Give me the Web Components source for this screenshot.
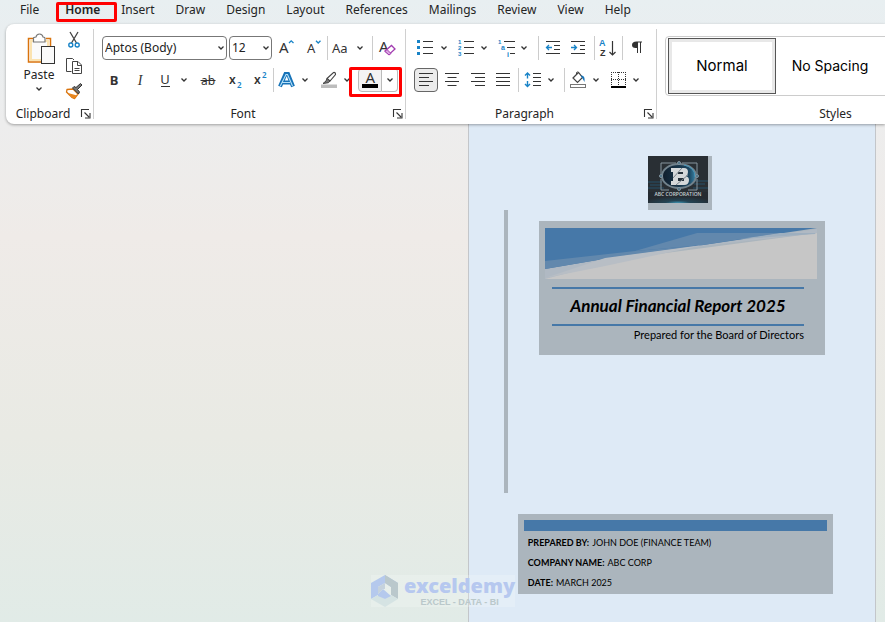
<!DOCTYPE html>
<html lang="en">
<head>
<meta charset="utf-8">
<title>Annual Financial Report</title>
<style>
html,body{height:100%}
body{margin:0;font-family:"Noto Sans","Open Sans",sans-serif;font-size:12px;line-height:16px;color:#242424}
</style>
</head>
<body>
<word-app></word-app>
<script>
const t=(x,y,s,str,extra='')=>`<text x="${x}" y="${y}" font-size="${s}" ${extra}>${str}</text>`;
const L=(d,c='#333',w=1,extra='')=>`<path d="${d}" stroke="${c}" stroke-width="${w}" fill="none" ${extra}/>`;
const B='#1883c7';
const ICONS={
 chev:[8,8,L('M1.5 2.5L4 5L6.5 2.5','#333',1.3)],
 bold:[20,20,t(10,14.5,13,'B','text-anchor="middle" font-weight="700"')],
 italic:[20,20,t(10,14.5,14,'I','text-anchor="middle" font-style="italic" font-family="Liberation Serif" font-weight="400"')],
 underline:[20,20,t(10,14,13,'U','text-anchor="middle"')+L('M6 16.5H15')],
 strike:[20,20,t(10,15,12,'ab','text-anchor="middle"')+L('M2.500 10.5H17.5')],
 sub:[20,20,t(4,14,12,'x','font-weight="600"')+t(12,18,8,'2',`fill="${B}" font-weight="600"`)],
 sup:[20,20,t(4,14,12,'x','font-weight="600"')+t(12,8,8,'2',`fill="${B}" font-weight="600"`)],
 grow:[20,20,t(3,15,15,'A')+L('M13 5L15.2 2.800L17.5 5',B,1.3)],
 shrink:[20,20,t(4,15,13,'A')+L('M13 2.800L15.2 5L17.5 2.800',B,1.3)],
 acase:[20,20,t(1,15,13,'Aa')],
 clear:[20,20,t(1,14,15,'A')+`<path d="M7 13l6.500-5.500 3.500 3.500-6 5.500z" fill="#fff" stroke="#a23bb0" stroke-width="1.300"/><path d="M9 11.500l4 4-2 1.500-4-3.500z" fill="#d9a6e0" stroke="#a23bb0"/>`],
 effect:[20,20,`<path d="M4 16.500L9.500 4H12L17 16.500M6.500 12.500H14.500" fill="none" stroke="#1673b8" stroke-width="4"/><path d="M4.300 16L10 4.500H11.500L16.500 16M6.500 12.500H14" fill="none" stroke="#b7e0f8" stroke-width="1.100"/>`],
 mark:[20,20,`<rect x="3" y="14.500" width="16" height="3.500" fill="#bdbdbd"/><path d="M9 8.500L15.500 2.500Q17.500 2 17.500 4.500L12 11z" fill="#fff" stroke="#444" stroke-width="1.100"/><path d="M9 8.500L12 11L10.500 12.700L5 13.500L8 11z" fill="#777" stroke="#444"/>`],
 fcolor:[20,20,t(5.500,12.500,15,'A')+`<rect x="2" y="14" width="16" height="4" fill="#000"/>`],
 bullets:[20,20,`<path d="M2 2h3v3h-3zM2 8h3v3h-3zM2 14h3v3h-3z" fill="${B}"/>`+L('M8 3.500H18M8 9.500H18M8 15.500H18')],
 numbers:[20,20,`<g fill="${B}" font-family="Liberation Sans" font-weight="700">${t(3,6,6,'1')+t(3,12,6,'2')+t(3,18,6,'3')}</g>`+L('M9 3.500H19M9 9.500H19M9 15.500H19')],
 levels:[20,20,`<g fill="${B}" font-family="Liberation Sans" font-weight="700">${t(3,6,6,'1')+t(6,12,7,'a')+t(12,19,7,'i')}</g>`+L('M9 3.500H20M12 9.500H20M15 15.500H20')],
 outdent:[20,20,L('M3 3.500H17M11 7.500H17M11 11.500H17M3 15.500H17')+L('M9 9.500H3.500M6 7L3.500 9.500L6 12',B,1.300)],
 indent:[20,20,L('M3 3.500H17M12 7.500H17M12 11.500H17M3 15.500H17')+L('M3 9.500H8.500M6 7L8.500 9.500L6 12',B,1.300)],
 sort:[20,20,`<g font-family="Liberation Sans" font-weight="700">${t(1,8,9,'A',`fill="${B}"`)+t(2,18,9,'Z')}</g>`+L('M14.500 3V17M11.500 14L14.500 17L17.500 14','#333',1.200)],
 pilcrow:[20,20,`<path d="M9.500 3.500H15V4.600H14V15H13V4.600H11V15H10V10C6.500 10.500 5 9 5 7C5 5 6.500 3.500 9.500 3.500z" fill="#333"/>`],
 left:[20,20,L('M3 3.500H17M3 7.500H13M3 11.500H17M3 15.500H13')],
 center:[20,20,L('M3 3.500H17M5.500 7.500H14.500M3 11.500H17M5.500 15.500H14.500')],
 right:[20,20,L('M3 3.500H17M7 7.500H17M3 11.500H17M7 15.500H17')],
 justify:[20,20,L('M3 3.500H17M3 7.500H17M3 11.500H17M3 15.500H17')],
 spacing:[20,20,L('M11 3.500H19M11 7.500H19M11 11.500H19M11 15.500H19')+L('M5.500 3V8.500M3 5.500L5.500 3L8 5.500M5.500 11V16.500M3 14L5.500 16.500L8 14',B,1.400)],
 shade:[20,20,`<rect x="3.500" y="14.500" width="15" height="3" fill="#fff" stroke="#777"/><path d="M6 8L11.500 2.500L15.500 7.500L10.500 12.500z" fill="#fff" stroke="#444" stroke-width="1.200"/><path d="M9.500 4V2.500Q11 1 12 3" fill="none" stroke="#444"/><path d="M13.500 5.500Q18.500 4.500 17.500 12Q15.500 8 13.500 5.500z" fill="#1673b8"/>`],
 borders:[20,20,L('M4.500 2V16M18.500 2V16M11.500 2V16M4 2.500H19M4 9.500H19','#333',1,'stroke-dasharray="1 1"')+L('M4 17H19','#000',2)],
 launch:[10,10,L('M.5 8V.5H8M3.500 3.500L8 8M9 4V9H4','#333',1.100)],
 paste:[32,32,`<g transform="translate(3 0)"><path d="M10 5.500H2.500V29H15M20 5.500H24.500V14" fill="none" stroke="#d9730d" stroke-width="1.500"/><path d="M4 7H23V14H15V28H4z" fill="#fbe3b0"/><path d="M6 9H21V14H15V26H6z" fill="#fafafa"/><path d="M7.500 9V5Q7.500 4 10 4Q10.500 1 13.500 1Q16.500 1 17 4Q19 4 19 5V9z" fill="#fff" stroke="#777" stroke-width="1.200"/><rect x="15.500" y="13.500" width="13" height="17" fill="#fafafa" stroke="#333"/></g>`],
 cut:[20,20,L('M6 2L12.500 13M14 2L7.500 13','#444',1.300)+`<circle cx="6.800" cy="15" r="2" fill="none" stroke="${B}" stroke-width="1.400"/><circle cx="13.200" cy="15" r="2" fill="none" stroke="${B}" stroke-width="1.400"/>`],
 copy:[20,20,`<path d="M7.500 15.500H2.500V2.500H8.500L10 4" fill="none" stroke="#444"/><path d="M8.500 5.500H14L17.500 9V17.500H8.500z" fill="#fff" stroke="#444"/>`+L('M13.500 5.500V9.500H17.500M10.500 12.500H15.500M10.500 14.500H15.500','#444')],
 brush:[20,20,`<path d="M3 8.500L9 8L14 13L10.500 17.500Q8 17.500 6 14.500L2.500 11z" fill="#fff" stroke="#d9730d" stroke-width="1.300"/><path d="M4 12L13 14.500L10.500 17.500Q8 17 6 14.500z" fill="#e8851c"/><path d="M8.500 7L14.500 13L15.500 11L13.500 8.500L18 4L16.500 2.500L12 6.500L10 5.500z" fill="#777" stroke="#333"/>`]
};
const define=(name,html,setup)=>{
 const tpl=document.createElement('template');tpl.innerHTML=html;
 customElements.define(name,class extends HTMLElement{
  connectedCallback(){ if(this.shadowRoot)return; const r=this.attachShadow({mode:'open'}); r.append(tpl.content.cloneNode(true)); if(setup)setup(this,r); }
 });
};
const BTN='button{border:0;padding:0;margin:0;background:none;font:inherit;color:inherit;display:flex;align-items:center;justify-content:center}button:hover{background:#f0f0f0}';

define('ui-icon','<style>:host{display:block;flex:none}svg{display:block;overflow:visible;fill:#333}</style><span></span>',(el,r)=>{
 const [w,h,body]=ICONS[el.getAttribute('name')];
 r.querySelector('span').innerHTML=`<svg aria-hidden="true" width="${w}" height="${h}" viewBox="0 0 ${w} ${h}">${body}</svg>`;
});
define('tool-button',`<style>:host{display:grid;height:24px}${BTN}
:host([pressed]) button{background:#ebebeb;border:1px solid #666;border-radius:4px;box-sizing:border-box}</style><button type="button"></button>`,(el,r)=>{
 const b=r.querySelector('button');b.setAttribute('aria-label',el.getAttribute('label'));
 b.innerHTML=`<ui-icon name="${el.getAttribute('icon')}"></ui-icon>`;
});
define('split-button',`<style>:host{display:flex;justify-content:center;height:24px;position:relative}${BTN}
.main{width:20px}.more{width:18px}
:host([framed]) .main{width:24px;background:#f3f3f3;border:1px solid #bbb;border-radius:4px 0 0 4px;box-sizing:border-box}
:host([framed]) .more{width:16px;border:1px solid #bbb;border-left:0;border-radius:0 4px 4px 0;box-sizing:border-box}
:host([framed])::after{content:"";position:absolute;inset:-1px -4px -5px -9px;border:3px solid #f00;border-radius:2px;pointer-events:none}
</style><button type="button" class="main"></button><button type="button" class="more"><ui-icon name="chev"></ui-icon></button>`,(el,r)=>{
 const [a,b]=r.querySelectorAll('button'),l=el.getAttribute('label');
 a.innerHTML=`<ui-icon name="${el.getAttribute('icon')}"></ui-icon>`;
 a.setAttribute('aria-label',l);b.setAttribute('aria-label',l+' options');
});
define('combo-box',`<style>:host{display:grid;align-items:center;height:24px}
select,ui-icon{grid-area:1/1}
select{appearance:none;width:100%;height:24px;border:1px solid #777;border-radius:4px;background:#fff;font:inherit;color:#222;padding:0 14px 0 2px;box-sizing:border-box}
ui-icon{justify-self:end;margin-right:2px;pointer-events:none}</style><select><option></option></select><ui-icon name="chev"></ui-icon>`,(el,r)=>{
 r.querySelector('select').setAttribute('aria-label',el.getAttribute('label'));
 r.querySelector('option').textContent=el.getAttribute('value');
});
define('tool-sep','<style>:host{display:block;width:1px;height:24px;background:#ccc;justify-self:center}</style>');
define('ribbon-group',`<style>:host{display:flex;flex-direction:column;box-sizing:border-box;flex:none;border-right:1px solid #d0d0d0;margin:5px 0}
.body{flex:1;display:flex;flex-direction:column;padding:7px 7px 0 8px;gap:8px}
footer{display:flex;align-items:center;height:10px;line-height:10px;padding-right:1px}
footer span{flex:1;text-align:center}
:host([plain]) footer button{visibility:hidden}
${BTN}footer button{width:12px;height:10px}</style><div class="body"><slot></slot></div><footer><span></span><button type="button" aria-label="More settings"><ui-icon name="launch"></ui-icon></button></footer>`,(el,r)=>{
 r.querySelector('span').textContent=el.getAttribute('label');
});
define('ribbon-tabs',`<style>:host{display:block}
nav{display:flex;gap:21px;padding:0 20px;height:24px;box-sizing:border-box}
button{all:unset;position:relative;height:20px;line-height:20px;white-space:nowrap}
.on{font-weight:600;padding-left:5px}
.on::after{content:"";position:absolute;inset:2px -17px -2px -4px;border:3px solid #f00;border-radius:2px}</style>
<nav aria-label="Ribbon tabs"></nav>`,(el,r)=>{
 r.querySelector('nav').innerHTML='File,Home,Insert,Draw,Design,Layout,References,Mailings,Review,View,Help'.split(',').map(n=>`<button type="button" class="${n==='Home'?'on':''}">${n}</button>`).join('');
});
define('paste-tools',`<style>:host{display:flex;gap:4px;height:75px;margin-top:-8px;padding-left:4px}
${BTN}.p{flex-direction:column;justify-content:flex-start;width:42px;gap:2px;padding-top:5px}
.p span{line-height:16px}
.c{display:flex;flex-direction:column;gap:2px}</style>
<button type="button" class="p"><ui-icon name="paste"></ui-icon><span>Paste</span><ui-icon name="chev"></ui-icon></button>
<div class="c"><tool-button icon="cut" label="Cut"></tool-button><tool-button icon="copy" label="Copy"></tool-button><tool-button icon="brush" label="Format painter"></tool-button></div>`);
define('style-gallery',`<style>:host{display:flex;height:58px;border:1px solid #ccc;border-radius:4px;padding:0 2px;align-items:center;font-family:Inter,sans-serif;color:#000}
${BTN}button{width:108px;height:56px;font-size:14px;line-height:20px;box-sizing:border-box}
.on{border:1px solid #555;box-shadow:inset 0 0 0 3px #e8e8e8;font-size:15px}</style>
<button type="button" class="on">Normal</button><button type="button">No Spacing</button>`);
define('word-ribbon',`<style>:host{display:block;padding-left:6px;overflow-x:clip}
.bar{display:flex;height:100px;background:#fff;border-radius:8px 0 0 8px;box-shadow:0 1px 3px #0005}
.row{display:grid;align-items:center;height:24px}
.clip{width:88px}.font{width:312px}.para{width:251px}.styles{flex:1 0 370px;border:0}
.f1{grid-template-columns:127px 43px 28px 26px 3px 42px 3px 27px}
.f2{grid-template-columns:24px 28px 40px 28px 26px 24px 3px 40px 43px 40px}
.p1{grid-template-columns:40px 40px 40px 8px 22px 28px 4px 24px 4px 26px}
.p2{grid-template-columns:24px 28px 24px 26px 4px 42px 4px 40px 40px}
.face{width:125px}</style>
<div class="bar">
<ribbon-group class="clip" label="Clipboard"><paste-tools></paste-tools></ribbon-group>
<ribbon-group class="font" label="Font">
<div class="row f1"><combo-box class="face" label="Font name" value="Aptos (Body)"></combo-box><combo-box label="Font size" value="12"></combo-box><tool-button icon="grow" label="Grow font"></tool-button><tool-button icon="shrink" label="Shrink font"></tool-button><tool-sep></tool-sep><split-button icon="acase" label="Change case"></split-button><tool-sep></tool-sep><tool-button icon="clear" label="Clear formatting"></tool-button></div>
<div class="row f2"><tool-button icon="bold" label="Bold"></tool-button><tool-button icon="italic" label="Italic"></tool-button><split-button icon="underline" label="Underline"></split-button><tool-button icon="strike" label="Strikethrough"></tool-button><tool-button icon="sub" label="Subscript"></tool-button><tool-button icon="sup" label="Superscript"></tool-button><tool-sep></tool-sep><split-button icon="effect" label="Text effects"></split-button><split-button icon="mark" label="Highlight"></split-button><split-button framed icon="fcolor" label="Font color"></split-button></div>
</ribbon-group>
<ribbon-group class="para" label="Paragraph">
<div class="row p1"><split-button icon="bullets" label="Bullets"></split-button><split-button icon="numbers" label="Numbering"></split-button><split-button icon="levels" label="Multilevel list"></split-button><tool-sep></tool-sep><tool-button icon="outdent" label="Decrease indent"></tool-button><tool-button icon="indent" label="Increase indent"></tool-button><tool-sep></tool-sep><tool-button icon="sort" label="Sort"></tool-button><tool-sep></tool-sep><tool-button icon="pilcrow" label="Show marks"></tool-button></div>
<div class="row p2"><tool-button pressed icon="left" label="Align left"></tool-button><tool-button icon="center" label="Center"></tool-button><tool-button icon="right" label="Align right"></tool-button><tool-button icon="justify" label="Justify"></tool-button><tool-sep></tool-sep><split-button icon="spacing" label="Line spacing"></split-button><tool-sep></tool-sep><split-button icon="shade" label="Shading"></split-button><split-button icon="borders" label="Borders"></split-button></div>
</ribbon-group>
<ribbon-group class="styles" plain label="Styles"><style-gallery></style-gallery></ribbon-group>
</div>`);
define('corp-logo',`<style>:host{display:block;background:#abb5bd;padding:0 4px 7px 0}svg{display:block}</style>
<svg width="60" height="47" viewBox="0 0 60 47" role="img" aria-label="ABC Corporation logo">
<defs><radialGradient id="g" cx=".5" cy="1" r=".6"><stop offset="0" stop-color="#3d95b5"/><stop offset=".35" stop-color="#234454"/><stop offset="1" stop-color="#252b31"/></radialGradient><linearGradient id="h" x1="0" x2="1"><stop offset="0" stop-color="#101d2b"/><stop offset=".8" stop-color="#1c4660"/><stop offset="1" stop-color="#3c88ad"/></linearGradient></defs>
<rect width="60" height="47" fill="#292f34"/><rect y="36" width="60" height="11" fill="url(#g)"/>
<path d="M0 26H14M46 25H60M2 29H14M46 28H57M0 32H16M45 32H60" stroke="#275068"/>
<path d="M13 18V7H28M34 7H49V18M13 23V34H21M40 34H49V23" fill="none" stroke="#87969e"/>
<ellipse cx="31" cy="20" rx="17" ry="12" fill="url(#h)" stroke="#71828c" stroke-width="2"/><path d="M36 9Q47 11 47 21" fill="none" stroke="#4496bb"/>
<path d="M23 12H36Q40 12 40 16Q40 19 38 20Q41 21 41 24Q41 29 36 29H23V25H25V16H23z" fill="#d4d8da"/><path d="M30 16H35V18H30zM30 22H36V25H30z" fill="#26323c"/><path d="M25 22L34 12M28 29L40 19" stroke="#78838b"/>
<g fill="#456f86" stroke="#8294a0"><circle cx="31" cy="7" r="1.500"/><circle cx="31" cy="33" r="1.500"/><circle cx="13" cy="20" r="1.500"/><circle cx="49" cy="20" r="1.500"/></g>
<text x="30" y="39.500" text-anchor="middle" font-family="Open Sans" font-weight="600" font-size="5" fill="#c7d0d5">ABC CORPORATION</text></svg>`);
define('cover-title',`<style>:host{display:block;background:#abb5bd;padding:7px 8px 12px 6px;color:#000;font-family:Lato,sans-serif}
svg{display:block;width:100%;height:51px}
h1{margin:8px 13px 0 7px;border:solid #4678a8;border-width:2px 0;font-size:17px;line-height:34px;height:35px;font-weight:700;font-style:italic;text-align:center;white-space:nowrap}
p{margin:0 13px 0 7px;text-align:right;font-size:11px;line-height:17px;white-space:nowrap}</style>
<svg viewBox="0 0 272 51" preserveAspectRatio="none" aria-hidden="true"><path d="M0 51V41L272 5V51z" fill="#c6c6c6"/><path d="M0 51V40L272 1V5L150 19L80 30z" fill="#b0b9c3"/><path d="M0 0H272L158 17L70 29L0 41z" fill="#4678a8"/><path d="M0 33L90 23L158 17L70 29L0 41z" fill="#6288ad"/><path d="M90 23L152 5H235L158 17z" fill="#6288ad"/><path d="M195 11L235 5H270V6z" fill="#9eafbf"/><path d="M0 50L60 30L158 17L60 38z" fill="#b8bec5"/></svg>
<h1><slot name="title"></slot></h1><p><slot name="sub"></slot></p>`);
define('cover-credits',`<style>:host{display:block;background:#abb5bd;padding:6px 6px 0;color:#000;font-family:Lato,sans-serif;font-size:9px;line-height:20px}
i{display:block;height:11px;background:#4678a8}dl{margin:2px 0 0 4px}div{display:flex;gap:3px;white-space:nowrap}dt{font-weight:700}dd{margin:0}</style>
<i></i><dl><div><dt>PREPARED BY:</dt><dd>JOHN DOE (FINANCE TEAM)</dd></div><div><dt>COMPANY NAME:</dt><dd>ABC CORP</dd></div><div><dt>DATE:</dt><dd>MARCH 2025</dd></div></dl>`);
define('cover-page',`<style>:host{display:flex;flex-direction:column;box-sizing:border-box;background:#deeaf6;border:solid #c3c6ca;border-width:0 1px;padding:32px 42px 27px 35px}
corp-logo{align-self:center;margin-left:24px}
.mid{display:grid;grid-template-columns:4px 1fr;column-gap:31px;min-height:283px}
.mid i{background:#abb5bd}
cover-title{align-self:start;margin:11px 8px 0 0}
cover-credits{margin:21px 0 0 14px;padding-bottom:1px}</style>
<corp-logo></corp-logo><div class="mid"><i></i><cover-title><slot name="title" slot="title"></slot><slot name="sub" slot="sub"></slot></cover-title></div><cover-credits></cover-credits>`);
define('water-mark',`<style>:host{display:flex;align-items:center;gap:5px;background:#fff3;height:32px;font-family:"Noto Sans",sans-serif;font-weight:700;pointer-events:none}
svg{flex:none}div{display:flex;flex-direction:column;align-items:center}b{font-size:20px;line-height:22px;color:#b6c8ef}small{font-family:"Liberation Sans";font-size:9px;line-height:10px;color:#bac8ca}</style>
<svg width="28" height="32" viewBox="0 0 28 32" aria-hidden="true"><path d="M14 0L27 8L20 12L14 8L7 12V20L0 24V8z" fill="#b5c9ed"/><path d="M14 0L27 8V24L20 20V12L14 8z" fill="#bac8cc"/><path d="M0 24L7 20L14 24L20 20L27 24L14 32z" fill="#d5e3e3"/><path d="M7 19L12 14L20 21L14 24L7 21z" fill="#b5c9ed"/><path d="M7 12L14 8V14L12 14L7 19z" fill="#c5d2dd"/></svg><div><b>exceldemy</b><small>EXCEL - DATA - BI</small></div>`);
define('word-app',`<style>:host{display:flex;flex-direction:column;min-height:100vh;position:relative;overflow:hidden;background:linear-gradient(#e8eff1,#e9eef0 5%,#ededed 20%,#efebe8 38%,#e9eae4 70%,#e1ebe7)}
word-ribbon{position:relative}
main{flex:1;display:flex;justify-content:flex-end;padding-right:9px}
cover-page{width:46.6%}
water-mark{position:absolute;left:371px;top:575px}
word-ribbon{z-index:1}</style>
<ribbon-tabs></ribbon-tabs><word-ribbon></word-ribbon><main><cover-page><span slot="title">Annual Financial Report 2025</span><span slot="sub">Prepared for the Board of Directors</span></cover-page></main><water-mark></water-mark>`);
</script>
</body>
</html>
